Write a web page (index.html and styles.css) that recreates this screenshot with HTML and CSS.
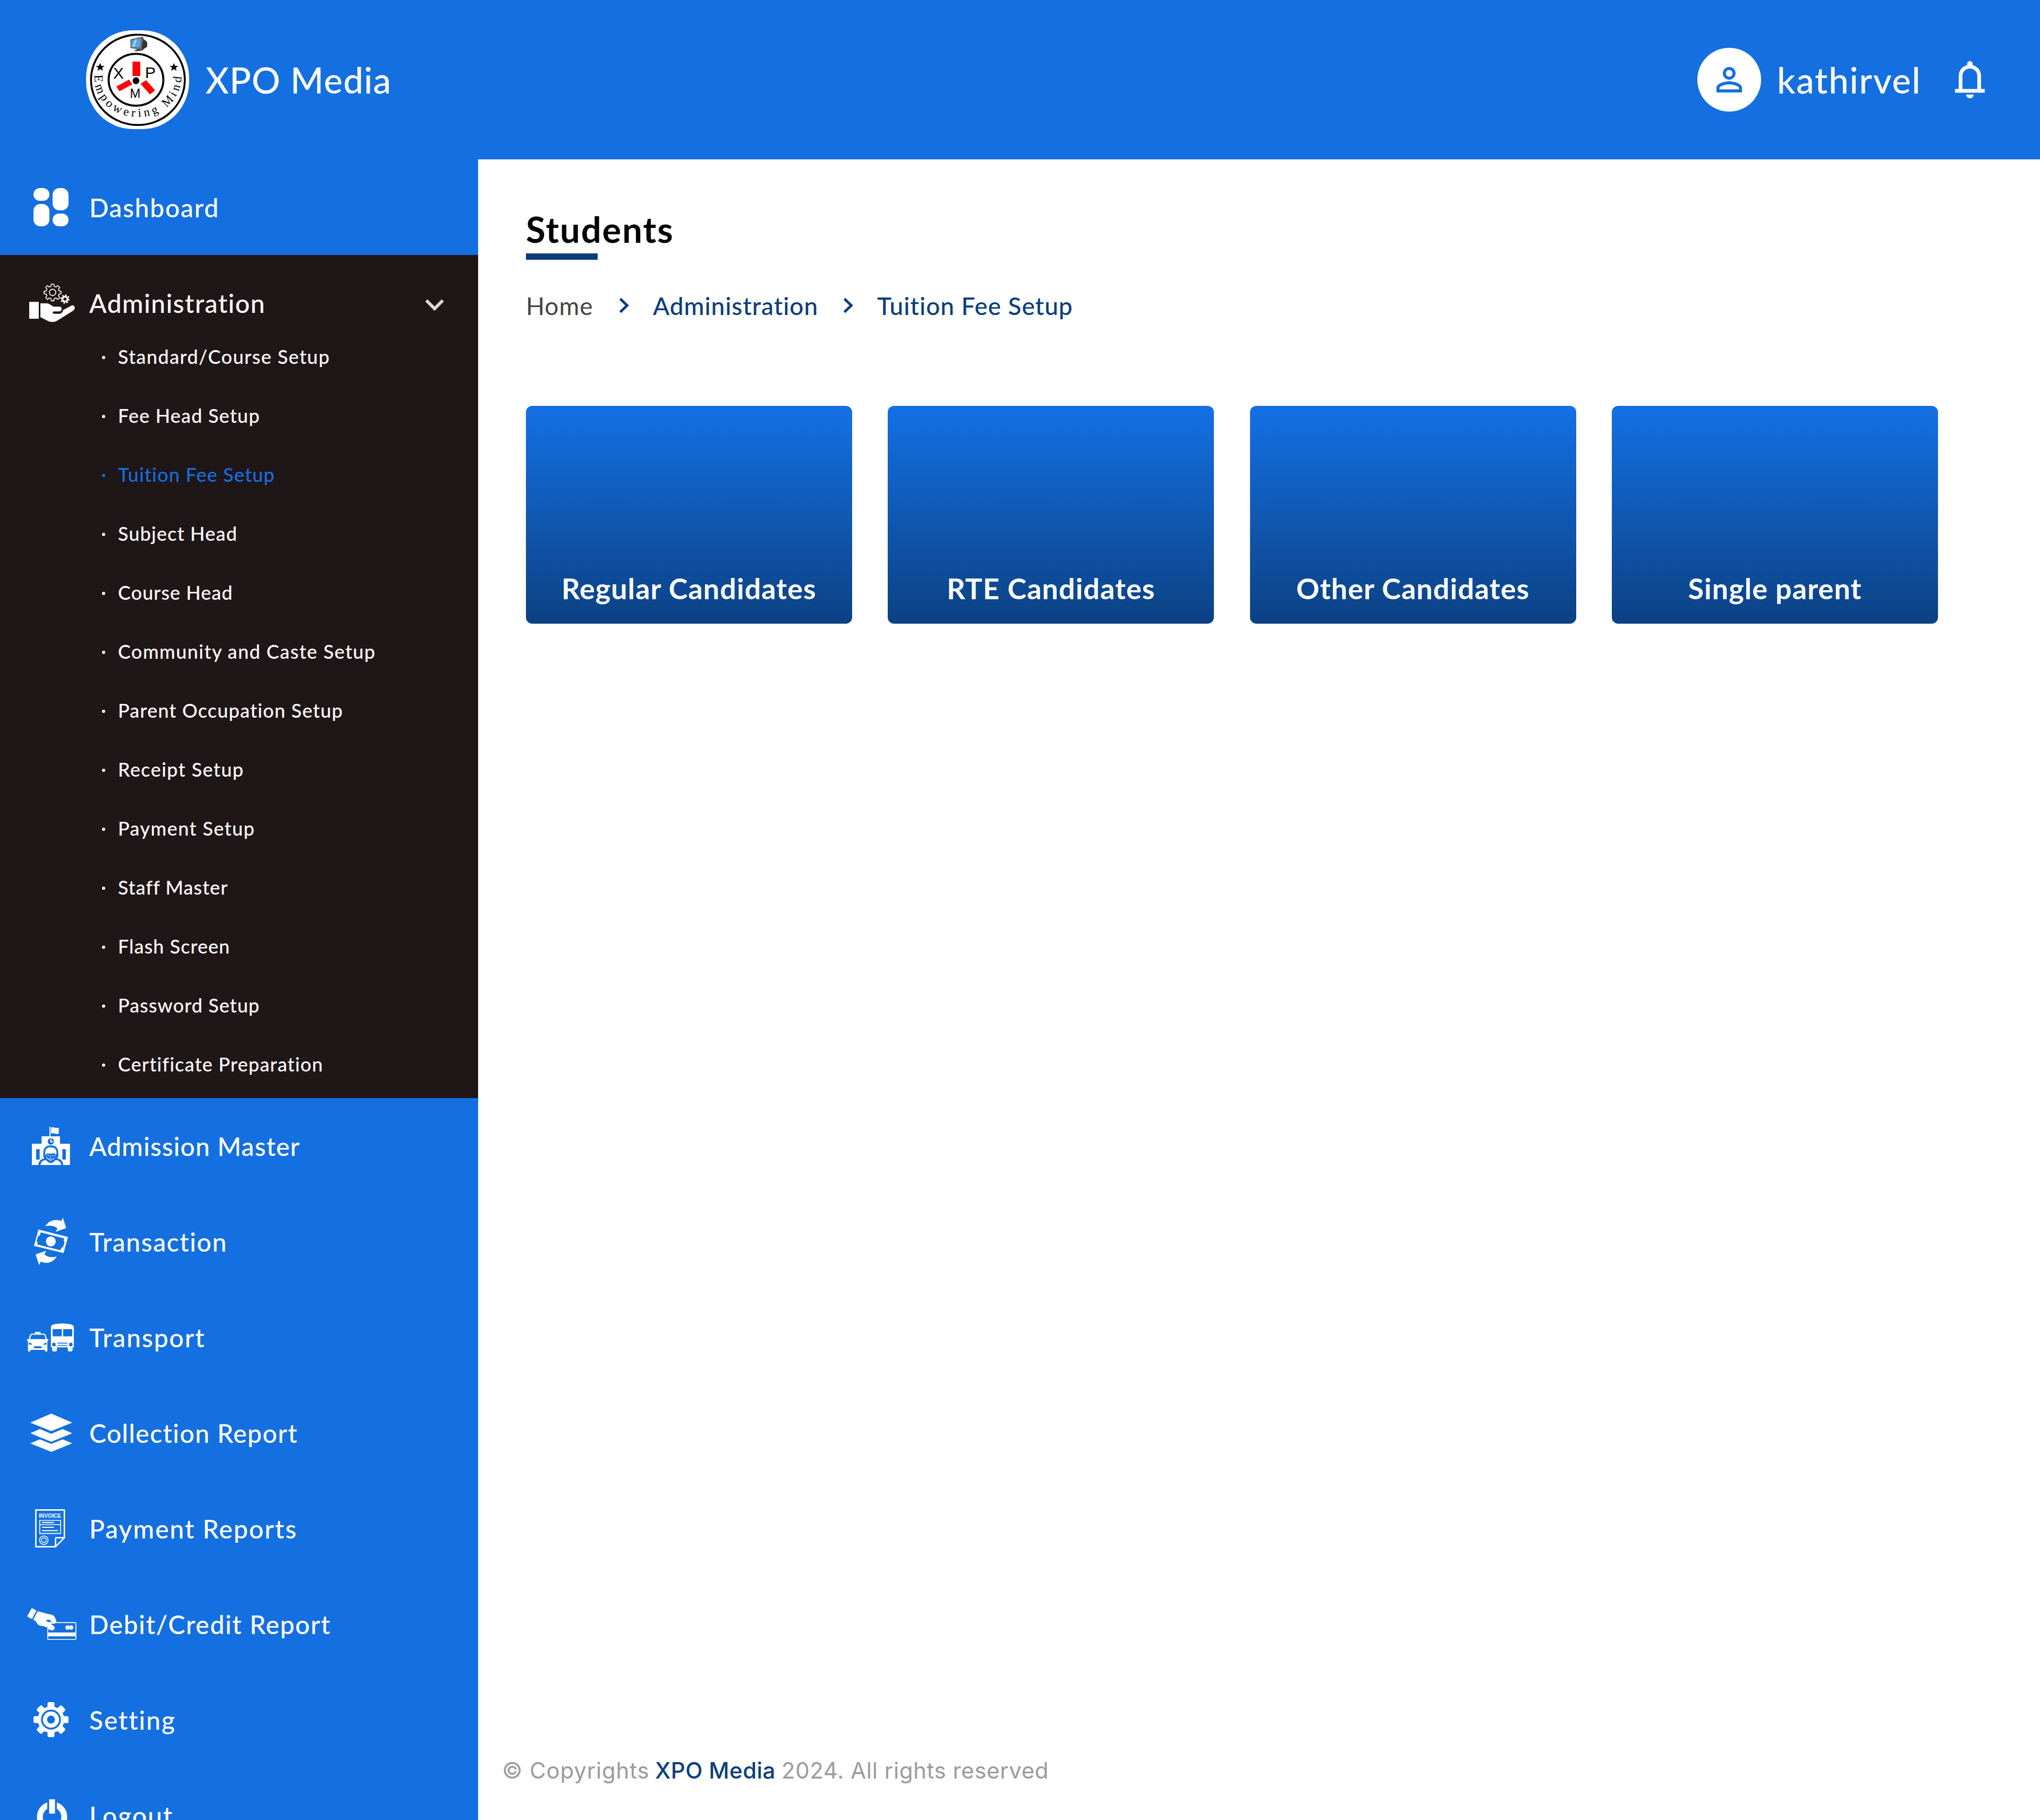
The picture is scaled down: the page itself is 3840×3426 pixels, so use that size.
FILE: index.html
```html
<!DOCTYPE html>
<html lang="en">
<head>
<meta charset="utf-8">
<title>XPO Media</title>
<link rel="stylesheet" href="styles.css">
</head>
<body>
<div class="app">
  <header class="topbar">
    <div class="brand">
      <svg class="brand-logo" viewBox="162 57 194 186">
        <defs><path id="motto" d="M178 141 C176 190 213 220 260 220 C307 220 344 186 342 136"/></defs>
        <rect x="162" y="57" width="194" height="186" rx="88" ry="90" fill="#fff"/>
        <ellipse cx="259.6" cy="150.3" rx="88.3" ry="85" fill="none" stroke="#000" stroke-width="3.6"/>
        <ellipse cx="256" cy="150.2" rx="51.5" ry="48.8" fill="none" stroke="#000" stroke-width="3.8"/>
        <path fill="#f00" d="M249.5 116H264v27h-14.500zM219 163l24-13.200 6 9-24.100 13zM264.500 157.700l10.500-6.600 17 19-9.700 7.600z"/>
        <ellipse cx="256" cy="152" rx="6.3" ry="6.4"/>
        <g class="logo-letters">
          <text x="213" y="148" font-size="30">X</text>
          <text x="273" y="147" font-size="30">P</text>
          <text x="244.500" y="184" font-size="24">M</text>
        </g>
        <path d="M188.600 118.500l2.200 5.500 6 .2-4.700 3.500 1.700 5.800-5.200-3.400-5.200 3.400 1.700-5.800-4.700-3.500 6-.2zM327.400 118.500l2.200 5.500 6 .2-4.700 3.500 1.700 5.800-5.200-3.400-5.200 3.400 1.700-5.800-4.700-3.500 6-.2z"/>
        <path fill="#333" d="M267 69l4 5 6 5v9l-6 4-3 3-13 1.500-2-2 5-1z"/>
        <path fill="#666" d="M245.500 74L268 69l2 2-3 23-21.500-3.500z"/>
        <path fill="#5aa2e6" d="M247.500 76l18-4-1.500 17.500-16.500-1z"/>
        <path fill="#a9d3f7" d="M254 74.500l4-1-5 15-4-.2z"/>
        <text class="logo-motto"><textPath href="#motto" textLength="252" lengthAdjust="spacing">Empowering Mind</textPath></text>
      </svg>
      <span class="brand-name">XPO Media</span>
    </div>
    <div class="account">
      <span class="avatar">
        <svg viewBox="0 0 24 24"><path d="M12 5.900c1.160 0 2.100.94 2.100 2.100s-.94 2.100-2.100 2.100S9.900 9.160 9.900 8s.94-2.100 2.100-2.100m0 9c2.970 0 6.100 1.460 6.100 2.100v1.100H5.900V17c0-.64 3.130-2.100 6.100-2.100M12 4C9.790 4 8 5.790 8 8s1.790 4 4 4 4-1.790 4-4-1.790-4-4-4zm0 9c-2.670 0-8 1.340-8 4v3h16v-3c0-2.660-5.330-4-8-4z"/></svg>
      </span>
      <span class="account-name">kathirvel</span>
      <svg class="bell" viewBox="0 0 24 24"><path d="M4 19v-2h2v-7q0-2.075 1.250-3.688T10.500 4.200v-.7q0-.625.438-1.062T12 2t1.063.438T13.500 3.500v.7q2 .5 3.250 2.113T18 10v7h2v2zm8 3q-.825 0-1.412-.587T10 20h4q0 .825-.587 1.413T12 22m-4-5h8v-7q0-1.650-1.175-2.825T12 6T9.175 7.175T8 10z"/></svg>
    </div>
  </header>

  <div class="body">
    <nav class="sidebar">
      <a class="nav-item">
        <span class="nav-icon"><svg width="66" height="72" viewBox="0 0 66 72"><rect width="30" height="24" rx="12"/><rect y="30" width="30" height="42" rx="13"/><rect x="36" width="30" height="42" rx="13"/><rect x="36" y="48" width="30" height="24" rx="12"/></svg></span>
        <span class="nav-label dashboard">Dashboard</span>
      </a>

      <div class="nav-group">
        <a class="nav-item nav-item-open">
          <span class="nav-icon shift-right"><svg width="86" height="72" viewBox="72 72 258 216">
            <path d="M72 175h54v95H72zM135 183h38q9 1 17 7l19 12h33q14 1 13 13-2 13-14 14h-31q-8 2-5 9 3 4 9 4h29q16-2 20-21l45-24q12-6 19 3 6 12-4 23l-95 59q-14 7-27 6-15 0-26-7l-40-20z"/>
            <g fill="none" stroke="#fff" stroke-width="5">
              <path stroke-linejoin="round" d="M197 74h14l2 12 10 5 10-8 11 10-7 11 4 9 11 2v13l-11 3-4 9 7 11-11 10-10-8-10 4-2 12h-14l-2-12-10-4-10 8-10-10 7-11-4-9-12-3v-13l12-2 4-9-7-11 10-10 10 8 10-5z"/>
              <circle cx="204" cy="121" r="18"/>
            </g>
            <circle cx="274" cy="159" r="14" fill="none" stroke="#fff" stroke-width="10"/>
            <circle cx="274" cy="159" r="22" fill="none" stroke="#fff" stroke-width="8" stroke-dasharray="8.640 8.640"/>
          </svg></span>
          <span class="nav-label administration">Administration</span>
          <svg class="nav-caret" viewBox="0 0 36 22"><path d="M2.500 2.500L18 18 33.500 2.500"/></svg>
        </a>
        <ul class="submenu">
          <li class="loose">Standard/Course Setup</li>
          <li>Fee Head Setup</li>
          <li class="active">Tuition Fee Setup</li>
          <li>Subject Head</li>
          <li class="snug">Course Head</li>
          <li class="loose">Community and Caste Setup</li>
          <li>Parent Occupation Setup</li>
          <li class="loose">Receipt Setup</li>
          <li class="loose">Payment Setup</li>
          <li class="snug">Staff Master</li>
          <li class="snug">Flash Screen</li>
          <li class="snug">Password Setup</li>
          <li>Certificate Preparation</li>
        </ul>
      </div>

      <a class="nav-item">
        <span class="nav-icon"><svg width="72" height="72" viewBox="60 63 216 216">
          <path d="M159 63h6v54h-6zM168 68q11-4 22 0t22 0v34q-11 5-22 0t-22 0zM60 159h55v-42h104v42h56v120H60z"/>
          <g fill="#146fe0"><circle cx="167" cy="146" r="18"/><path d="M84 190h20v58H84zM232 190h20v58h-20zM97 279q2-34 33-37-8-12-5-28-2-45 42-46 44 1 42 46 3 16-5 28 31 3 33 37z"/></g>
          <path d="M164 133h6v12h10v6h-16zM109 279q1-26 31-28 27 34 53 0 31 2 33 28zM135 214q-3-35 31-35 35 0 33 35l-8 18q-4 18-25 22-20-4-24-22z"/>
          <path fill="#146fe0" d="M142 214q26 3 48-2l3 12q-4 20-27 26-20-6-25-24z"/>
          <path fill="none" stroke="#fff" stroke-width="3" d="M148 224l12 3M185 224l-12 3M166 226v10M159 241q7 3 14 0"/>
        </svg></span>
        <span class="nav-label admission">Admission Master</span>
      </a>
      <a class="nav-item">
        <span class="nav-icon"><svg width="64" height="90" viewBox="69 577 192 269">
          <path fill-rule="evenodd" d="M94 644l167 42-25 91-167-41zM107 660l-4 14q-3 7-11 8l-8 27q7 5 4 13l-2 6 132 33 4-10q3-7 11-8l9-28q-7-5-5-12l3-9z"/>
          <circle cx="164" cy="711" r="28"/>
          <path d="M131 626q27-39 68-36 13 1 24 6l9-19 19 59-60 21 11-20q-31-23-71-11zM198 796q-24 38-64 36-15-1-27-7l-9 21-20-62 60-20-10 21q28 23 70 11z"/>
        </svg></span>
        <span class="nav-label transaction">Transaction</span>
      </a>
      <a class="nav-item">
        <span class="nav-icon shift-left"><svg width="88" height="53" viewBox="32 33 263 158">
          <path fill-rule="evenodd" d="M76 81h32v10h20q7 1 9 9l7 22h7v10h-5v59h-14v-9H51v9H37v-59h-5v-10h9l7-22q2-8 9-9h19zM57 97l-9 25h89l-8-25zM42 142v11h19q-5-10-19-11zM141 142q-13 1-18 11h18zM71 162v11h42v-11z"/>
          <path fill-rule="evenodd" d="M166 53q1-10 18-15 45-9 91 0 18 4 20 15v115h-7v16q-1 7-8 7h-12q-7 0-7-7v-16h-61v16q-1 7-8 7h-12q-7 0-7-7v-16h-7zM176 66v40h51V66zM235 66v40h51V66zM203 142v5h56v-5zM203 155v5h56v-5zM173 152a10 10 0 1 0 20 0 10 10 0 1 0-20 0M268 152a10 10 0 1 0 20 0 10 10 0 1 0-20 0"/>
        </svg></span>
        <span class="nav-label transport">Transport</span>
      </a>
      <a class="nav-item">
        <span class="nav-icon"><svg width="79" height="72" viewBox="0 0 79 72"><path d="M39.500 0L79 17 39.500 33 0 17zM18 29l21.500 9L61 29l18 8-39.500 16L0 37zM18 48.500l21.500 8.500L61 48.500 79 56 39.500 72 0 56z"/></svg></span>
        <span class="nav-label collection">Collection Report</span>
      </a>
      <a class="nav-item">
        <span class="nav-icon shift-left"><svg width="57" height="72" viewBox="78 33 170 216">
          <g fill="none" stroke="#fff" stroke-width="8" stroke-linejoin="round"><path d="M82 37h161v157l-50 51H82zM243 194h-44q-6 0-6 6v45"/></g>
          <g fill="none" stroke="#fff" stroke-width="5"><path d="M104 96h118v74H104zM104 120h118"/><path stroke-width="6" stroke-linecap="round" d="M119 108h63M119 135h63M119 154h86"/><circle cx="127" cy="208" r="24"/><circle cx="127" cy="208" r="13"/></g>
          <text class="invoice-word" x="99" y="81" textLength="126" lengthAdjust="spacingAndGlyphs">INVOICE</text>
        </svg></span>
        <span class="nav-label payment">Payment Reports</span>
      </a>
      <a class="nav-item">
        <span class="nav-icon shift-right"><svg width="93" height="60" viewBox="33 596 278 180">
          <path d="M59 596l26 14-25 48-27-15zM92 614q33 8 54 15 28 3 36 10 11 10 16 36l-6 8-36 4 27 11q11 8 0 19-16 8-39-12-18-8-40-10-13-5-19-20-9-10-18-13z"/>
          <path fill="none" stroke="#fff" stroke-width="5" d="M190 678h112q6 0 6 6v84q0 6-6 6H155q-6 0-6-6v-58"/>
          <path d="M149 734h159v22H149z"/>
          <path d="M152 682q20 4 31 17 10 14-3 22-16 4-31-9z"/>
          <path fill="#146fe0" d="M139 667q10-9 25-2l9 12-13-4-6 4z"/>
          <circle cx="261" cy="706" r="12.500"/><circle cx="281" cy="706" r="12.500"/>
        </svg></span>
        <span class="nav-label debit">Debit/Credit Report</span>
      </a>
      <a class="nav-item">
        <span class="nav-icon"><svg width="66" height="66" viewBox="-33 -33 66 66">
          <g id="teeth"><rect x="-6.500" y="-33" width="13" height="66" rx="3"/><rect x="-33" y="-6.500" width="66" height="13" rx="3"/></g>
          <use href="#teeth" transform="rotate(45)"/>
          <circle r="25"/><circle r="17" fill="none" stroke="#146fe0" stroke-width="3.500"/><circle r="7.500" fill="#146fe0"/>
        </svg></span>
        <span class="nav-label setting">Setting</span>
      </a>
      <a class="nav-item">
        <span class="nav-icon shift-right"><svg width="58" height="61" viewBox="0 0 58 61"><path d="M23.500 0h11v27h-11zM20 6v12a17.500 17.500 0 1 0 18 0V6a28.500 28.500 0 1 1-18 0z"/></svg></span>
        <span class="nav-label logout">Logout</span>
      </a>
    </nav>

    <main class="content">
      <h1 class="page-title">Students</h1>
      <div class="breadcrumb">
        <span class="crumb-home">Home</span>
        <svg class="crumb-sep" viewBox="0 0 19 30"><path d="M2.500 2.500L15.500 15 2.500 27.500"/></svg>
        <span class="crumb-admin">Administration</span>
        <svg class="crumb-sep" viewBox="0 0 19 30"><path d="M2.500 2.500L15.500 15 2.500 27.500"/></svg>
        <span class="crumb-current">Tuition Fee Setup</span>
      </div>
      <section class="cards">
        <a class="card">Regular Candidates</a>
        <a class="card">RTE Candidates</a>
        <a class="card">Other Candidates</a>
        <a class="card">Single parent</a>
      </section>
      <footer class="footer">
        <span class="foot-a">© Copyrights</span>
        <span class="foot-brand">XPO Media</span>
        <span class="foot-b">2024. All rights reserved</span>
      </footer>
    </main>
  </div>
</div>
</body>
</html>
```

FILE: styles.css
```css
* { box-sizing: border-box; }
body {
  margin: 0;
  background: #fff;
  font-family: Lato, "Open Sans", sans-serif;
  font-weight: 500;
  white-space: nowrap;
}
.app {
  display: flex;
  flex-direction: column;
  height: 3426px;
  overflow: hidden;
}
svg { display: block; flex: none; }

.topbar {
  display: flex;
  align-items: center;
  justify-content: space-between;
  flex: none;
  height: 300px;
  padding: 0 90px 0 162px;
  background: #146fe0;
  color: #fff;
}
.brand { display: flex; align-items: center; gap: 31px; }
.brand-logo { width: 194px; height: 186px; }
.brand-name { font-size: 67px; letter-spacing: 1.2px; }
.logo-letters { font-family: "Liberation Sans", Arial, sans-serif; font-weight: 400; }
.logo-motto { font-family: "Liberation Serif", serif; font-size: 23px; font-weight: 400; }
.account { display: flex; align-items: center; }
.avatar {
  display: flex;
  align-items: center;
  justify-content: center;
  width: 120px;
  height: 120px;
  border-radius: 50%;
  background: #fff;
}
.avatar svg { width: 72px; height: 72px; fill: #146fe0; }
.account-name { width: 351px; padding-left: 30px; font-size: 67px; letter-spacing: 1.8px; }
.bell { width: 84px; height: 84px; fill: #fff; }

.body { display: flex; flex: 1; min-height: 0; }
.sidebar {
  flex: none;
  width: 900px;
  overflow: hidden;
  background: #146fe0;
  color: #fff;
  fill: #fff;
}
.nav-item {
  display: flex;
  align-items: center;
  height: 180px;
  padding-left: 42px;
  padding-right: 64px;
}
.nav-item-open { height: 135px; padding-top: 45px; }
.nav-icon { display: flex; justify-content: center; flex: none; width: 108px; }
.shift-left { padding-right: 3px; }
.shift-right { padding-left: 3px; }
.nav-label { padding-left: 18px; font-size: 48px; }
.dashboard { letter-spacing: 1.7px; }
.administration { letter-spacing: 1.45px; }
.admission { letter-spacing: 1.1px; }
.transaction { letter-spacing: 1.6px; }
.transport { letter-spacing: 1.9px; }
.collection { letter-spacing: 1.4px; }
.payment { letter-spacing: 2px; }
.debit { letter-spacing: 1.6px; }
.setting { letter-spacing: 1.9px; }
.logout { letter-spacing: 2px; }
.nav-caret {
  width: 36px;
  height: 22px;
  margin: 8px 0 0 auto;
  fill: none;
  stroke: #d9d9d9;
  stroke-width: 6;
}
.invoice-word { font: 700 34px "Liberation Sans", Arial, sans-serif; }
.nav-group { padding-bottom: 9px; background: #1f1617; }
.submenu { margin: 0; padding: 0 0 0 192px; list-style: none; }
.submenu li {
  display: flex;
  align-items: center;
  height: 111px;
  font-size: 36px;
  letter-spacing: 1.17px;
}
.submenu .loose { letter-spacing: 1.4px; }
.submenu .snug { letter-spacing: 1.02px; }
.submenu li::before {
  content: "";
  width: 6px;
  height: 6px;
  margin: 4px 24px 0 0;
  border-radius: 50%;
  background: currentColor;
}
.submenu .active { color: #146fe0; }

.content { display: flex; flex-direction: column; flex: 1; padding: 89px 192px 0 90px; }
.page-title {
  display: flex;
  flex-direction: column;
  margin: 0;
  color: #000;
  font-size: 67px;
  font-weight: 700;
  line-height: 85px;
  letter-spacing: 1.9px;
}
.page-title::after { content: ""; width: 135px; height: 12px; margin-top: 3px; background: #0b3d7b; }
.breadcrumb {
  display: flex;
  align-items: center;
  height: 60px;
  margin-top: 56px;
  color: #0b3d7b;
  font-size: 46px;
  letter-spacing: 0.95px;
}
.crumb-home { width: 175px; color: #444; font-weight: 400; }
.crumb-admin { width: 358px; letter-spacing: 0.9px; }
.crumb-sep { width: 19px; height: 30px; margin-right: 45px; fill: none; stroke: #0b3d7b; stroke-width: 5; }
.cards {
  display: grid;
  grid-template-columns: repeat(4, 1fr);
  gap: 67.500px;
  margin-top: 159px;
}
.card {
  display: flex;
  align-items: flex-end;
  justify-content: center;
  height: 410px;
  padding-bottom: 34px;
  border-radius: 12px;
  background: linear-gradient(180deg, #146fe2 3%, #0c4183 100%);
  color: #fff;
  font-size: 54px;
  font-weight: 700;
  line-height: 64px;
  letter-spacing: 1px;
}
.footer {
  display: flex;
  align-items: center;
  height: 60px;
  margin: auto 0 64px -45px;
  color: #9b9b9b;
  font: 400 42px Inter, "Open Sans", sans-serif;
}
.foot-a { width: 288px; letter-spacing: 0.85px; }
.foot-brand { width: 238px; color: #0b3d7b; font-weight: 500; letter-spacing: 0.4px; }
.foot-b { letter-spacing: 0.6px; }
```
